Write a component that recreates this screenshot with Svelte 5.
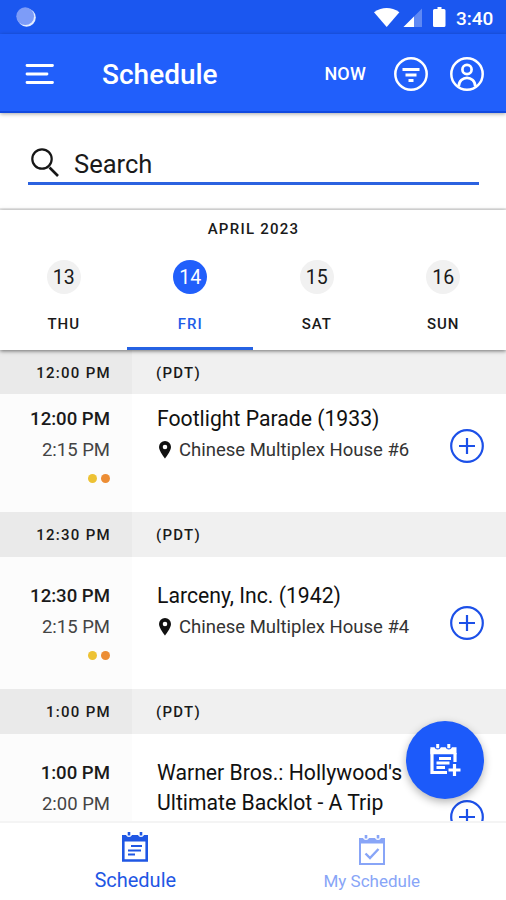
<script>
	const days = [
		{ num: 13, name: 'THU' },
		{ num: 14, name: 'FRI' },
		{ num: 15, name: 'SAT' },
		{ num: 16, name: 'SUN' }
	];

	const slots = [
		{
			time: '12:00 PM',
			end: '2:15 PM',
			title: 'Footlight Parade (1933)',
			place: 'Chinese Multiplex House #6'
		},
		{
			time: '12:30 PM',
			end: '2:15 PM',
			title: 'Larceny, Inc. (1942)',
			place: 'Chinese Multiplex House #4'
		},
		{
			time: '1:00 PM',
			end: '2:00 PM',
			title: "Warner Bros.: Hollywood's Ultimate Backlot - A Trip",
			place: ''
		}
	];

	let selected = $state(14);
	let tab = $state('schedule');
</script>

<div class="app">
	<div class="status">
		<svg class="loader" width="20" height="20" viewBox="0 0 20 20">
			<circle cx="10.6" cy="10.6" r="9.2" fill="#e4ecff" />
			<circle cx="9.2" cy="9.2" r="8.9" fill="#7d9cf8" />
		</svg>
		<svg class="signals" width="82" height="24" viewBox="0 0 82 24" fill="#fff">
			<path d="M0 5.200Q12.700-3.200 25.400 5.200L12.700 20Z" />
			<path d="M48 1.500V20H29.500Z" opacity=".3" />
			<path d="M40 9.500V20H29.500Z" />
			<path d="M63.500 0h4v2h2.500q1.500 0 1.500 1.500v15q0 1.500-1.500 1.500h-9.500q-1.500 0-1.500-1.500v-15q0-1.500 1.500-1.500h3z" />
		</svg>
		<span class="clock">3:40</span>
	</div>

	<header>
		<svg class="menu" width="30" height="24" viewBox="0 0 30 24" stroke="#fff" stroke-width="2.800" stroke-linecap="round">
			<path d="M2 3.500h25.500M2 12h20M2 20.500h25.500" />
		</svg>
		<h1>Schedule</h1>
		<button class="now">NOW</button>
		<button aria-label="Filter">
			<svg width="36" height="36" viewBox="0 0 36 36" fill="none" stroke="#fff">
				<circle cx="18" cy="18" r="15.700" stroke-width="2.500" />
				<path d="M9.500 13.500h17M12.500 19h11M15.500 24.500h5" stroke-width="2.900" />
			</svg>
		</button>
		<button aria-label="Profile">
			<svg width="36" height="36" viewBox="0 0 36 36" fill="none" stroke="#fff" stroke-width="2.500">
				<circle cx="18" cy="18" r="15.700" />
				<circle cx="18" cy="13.500" r="4.600" stroke-width="2.700" />
				<path d="M9.700 30.500C10 19 26 19 26.300 30.500" stroke-width="2.700" />
			</svg>
		</button>
	</header>

	<section class="search">
		<div class="field">
			<svg width="30" height="30" viewBox="0 0 30 30" fill="none" stroke="#161616">
				<circle cx="11" cy="11" r="9.700" stroke-width="2.200" />
				<path d="M18.500 19.500L27 28" stroke-width="2.600" />
			</svg>
			<span>Search</span>
		</div>
	</section>

	<section class="dates">
		<div class="month">APRIL 2023</div>
		<div class="days">
			{#each days as day}
				<button class="day" class:active={selected === day.num} onclick={() => (selected = day.num)}>
					<span class="num">{day.num}</span>
					<span class="name">{day.name}</span>
				</button>
			{/each}
		</div>
	</section>

	<main>
		{#each slots as slot}
			<div class="slot-head">
				<div class="left">{slot.time}</div>
				<div class="zone">(PDT)</div>
			</div>
			<div class="event" class:tall={!slot.place}>
				<div class="left">
					<div class="start">{slot.time}</div>
					<div class="end">{slot.end}</div>
					<div class="dots"><i class="yellow"></i><i class="orange"></i></div>
				</div>
				<div class="info">
					<div class="title">{slot.title}</div>
					{#if slot.place}
						<div class="place">
							<svg width="12" height="18" viewBox="0 0 12 18">
								<path fill="#111" fill-rule="evenodd" d="M6 0a6 6 0 0 1 6 6c0 4.200-6 11.500-6 11.500S0 10.200 0 6a6 6 0 0 1 6-6zm0 3.700a2.300 2.300 0 1 0 0 4.600 2.300 2.300 0 0 0 0-4.600z" />
							</svg>
							<span>{slot.place}</span>
						</div>
					{/if}
				</div>
				<button class="add" aria-label="Add to my schedule">
					<svg width="34" height="34" viewBox="0 0 34 34" fill="none" stroke="#1c50e8" stroke-width="2.200">
						<circle cx="17" cy="17" r="15.800" />
						<path d="M17 9v16M9 17h16" />
					</svg>
				</button>
			</div>
		{/each}
	</main>

	<nav>
		<button class:current={tab === 'schedule'} onclick={() => (tab = 'schedule')}>
			<svg width="26" height="30" viewBox="0 0 26 30" fill="none" stroke="currentColor">
				<path d="M1.300 5v23.500h23.400V5" stroke-width="2.600" />
				<path d="M0 3h4a3.200 3.200 0 0 0 6 0h6a3.200 3.200 0 0 0 6 0h4v6.500H0z" fill="currentColor" stroke="none" />
				<path d="M7 0v3.600M19 0v3.600" stroke-width="2.600" />
				<path d="M9 14h11M6 18.500h13M6 22.500h7" stroke-width="2.200" />
			</svg>
			<span>Schedule</span>
		</button>
		<button class="mine" class:current={tab === 'mine'} onclick={() => (tab = 'mine')}>
			<svg width="26" height="30" viewBox="0 0 26 30" fill="none" stroke="currentColor">
				<path d="M1 5v24h24V5" stroke-width="2" />
				<path d="M0 3h4a3.200 3.200 0 0 0 6 0h6a3.200 3.200 0 0 0 6 0h4v5.500H0z" fill="currentColor" stroke="none" />
				<path d="M7 0v3.600M19 0v3.600" stroke-width="2.600" />
				<path d="M6.500 18.500l4.500 4.500 8.500-9" stroke-width="2.400" />
			</svg>
			<span>My Schedule</span>
		</button>
	</nav>

	<button class="fab" aria-label="Add event">
		<svg width="32" height="32" viewBox="0 0 32 32" fill="none" stroke="#fff">
			<path d="M18 28.500H3V5M26 9v9" stroke-width="3.200" />
			<path d="M1.400 3.200H5.500a3.400 3.400 0 0 0 6.400 0h4.700a3.400 3.400 0 0 0 6.400 0h4.500v7H1.400z" fill="#fff" stroke="none" />
			<path d="M8.700 0v4.200M19.800 0v4.200" stroke-width="3" />
			<path d="M10 14.500h12M7.500 19h13M7.500 23.500h8.500" stroke-width="3" />
			<path d="M25.500 20v12M19.500 26h12" stroke-width="3.200" />
		</svg>
	</button>
</div>

<style>
	:global(body) {
		margin: 0;
		background: #fff;
	}

	button {
		padding: 0;
		border: 0;
		background: none;
		font: inherit;
		color: inherit;
		display: block;
	}

	svg {
		display: block;
		flex: none;
	}

	.app {
		position: relative;
		display: flex;
		flex-direction: column;
		width: 506px;
		height: 900px;
		overflow: hidden;
		font-family: Roboto, 'Liberation Sans', sans-serif;
		color: #1a1a1a;
	}

	.status {
		display: flex;
		align-items: center;
		height: 34px;
		flex: none;
		box-sizing: border-box;
		padding-left: 16px;
		background: #1b57f0;
		color: #fff;
	}

	.loader {
		margin-right: 338px;
	}

	.signals {
		margin-top: 4px;
	}

	.clock {
		font-size: 19px;
		font-weight: 500;
		line-height: 34px;
		padding-top: 3px;
	}

	header {
		display: flex;
		align-items: center;
		height: 79px;
		flex: none;
		box-sizing: border-box;
		padding: 2px 21px 0 25px;
		background: #215ffb;
		border-bottom: 2px solid #1149e0;
		color: #fff;
		position: relative;
		z-index: 2;
		box-shadow: 0 1px 4px rgba(0, 0, 0, 0.35);
	}

	h1 {
		flex: 1;
		margin: 2px 0 0 47px;
		font-size: 28px;
		font-weight: 500;
		line-height: 36px;
	}

	.now {
		font-size: 18px;
		font-weight: 500;
		letter-spacing: 0.2px;
		margin-right: 27px;
	}

	header button + button + button {
		margin-left: 20px;
	}

	.search {
		height: 97px;
		flex: none;
		box-sizing: border-box;
		padding: 30px 27px 0 28px;
		border-bottom: 2px solid #ececec;
	}

	.field {
		display: flex;
		align-items: center;
		height: 39px;
		padding-left: 3px;
		border-bottom: 3px solid #2b62e0;
		font-size: 25.5px;
	}

	.field span {
		margin: 2px 0 0 13px;
	}

	.dates {
		height: 140px;
		flex: none;
		background: #fff;
		position: relative;
		z-index: 1;
		box-shadow: 0 1px 4px rgba(0, 0, 0, 0.55);
	}

	.month {
		padding: 9px 0 0 1px;
		line-height: 20px;
		font-size: 15px;
		font-weight: 500;
		letter-spacing: 1.25px;
		text-align: center;
	}

	.days {
		display: grid;
		grid-template-columns: repeat(4, 1fr);
		height: 111px;
	}

	.day {
		display: flex;
		flex-direction: column;
		align-items: center;
		padding: 21px 0 0 1px;
		border-bottom: 3px solid transparent;
	}

	.num {
		width: 34px;
		height: 34px;
		line-height: 35px;
		border-radius: 50%;
		background: #f1f1f1;
		font-size: 19.5px;
		text-align: center;
	}

	.name {
		margin-top: 20px;
		line-height: 20px;
		font-size: 15px;
		font-weight: 500;
		letter-spacing: 1px;
	}

	.day.active {
		border-color: #2662e3;
		color: #215ce8;
	}

	.active .num {
		background: #215ffb;
		color: #fff;
	}

	main {
		flex: 1;
		min-height: 0;
		overflow: hidden;
	}

	.slot-head,
	.event {
		display: flex;
	}

	.left {
		width: 132px;
		flex: none;
		box-sizing: border-box;
		padding-right: 22px;
		text-align: right;
	}

	.slot-head {
		height: 45px;
		background: #f0f0f0;
		font-size: 15px;
		font-weight: 500;
		letter-spacing: 1.3px;
		line-height: 47px;
	}

	.slot-head:first-child {
		height: 44px;
	}

	.slot-head .left {
		background: #eaeaea;
		padding-right: 21px;
	}

	.zone {
		padding-left: 24px;
	}

	.event {
		height: 132px;
	}

	.event > div {
		padding-top: 24px;
	}

	.event .add {
		margin: 49px 22px 0 0;
		align-self: flex-start;
	}

	.event.tall .add {
		margin-top: 66px;
	}

	/* the list is scrolled a little under its first heading */
	.slot-head:first-child + .event {
		height: 118px;
	}

	.slot-head:first-child + .event > div {
		padding-top: 10px;
	}

	.slot-head:first-child + .event .add {
		margin-top: 35px;
	}

	.event .left {
		background: #fcfcfc;
	}

	.start {
		font-size: 18.6px;
		font-weight: 500;
		line-height: 31px;
	}

	.end {
		font-size: 18.5px;
		line-height: 30px;
		color: #444;
	}

	.dots {
		display: flex;
		justify-content: flex-end;
		gap: 4px;
		margin-top: 9px;
	}

	.dots i {
		width: 9px;
		height: 9px;
		border-radius: 50%;
	}

	.yellow {
		background: #edc234;
	}

	.orange {
		background: #ec8d34;
	}

	.info {
		flex: 1;
		padding-left: 25px;
	}

	.title {
		width: 260px;
		font-size: 21.200px;
		line-height: 30px;
		color: #111;
	}

	.place {
		display: flex;
		align-items: center;
		gap: 8px;
		padding-left: 2px;
		line-height: 32px;
		font-size: 18.5px;
		color: #333;
	}

	nav {
		display: flex;
		height: 79px;
		flex: none;
		box-sizing: border-box;
		padding: 0 16px 0 17px;
		background: #fff;
		border-top: 2px solid #f4f4f4;
	}

	nav button {
		flex: 1;
		display: flex;
		flex-direction: column;
		align-items: center;
		padding-top: 9px;
		font-size: 20px;
		line-height: 24px;
		color: #88a5f7;
	}

	nav button span {
		margin-top: 6px;
	}

	nav .current {
		color: #1f57e4;
	}

	nav .mine {
		padding-top: 12px;
		font-size: 17px;
	}

	nav .mine span {
		margin-top: 4px;
	}

	.fab {
		position: absolute;
		right: 22px;
		top: 721px;
		width: 78px;
		height: 78px;
		border-radius: 50%;
		background: #1c5afa;
		display: grid;
		place-items: center;
		box-shadow: 0 3px 8px rgba(0, 0, 0, 0.3);
	}
</style>
